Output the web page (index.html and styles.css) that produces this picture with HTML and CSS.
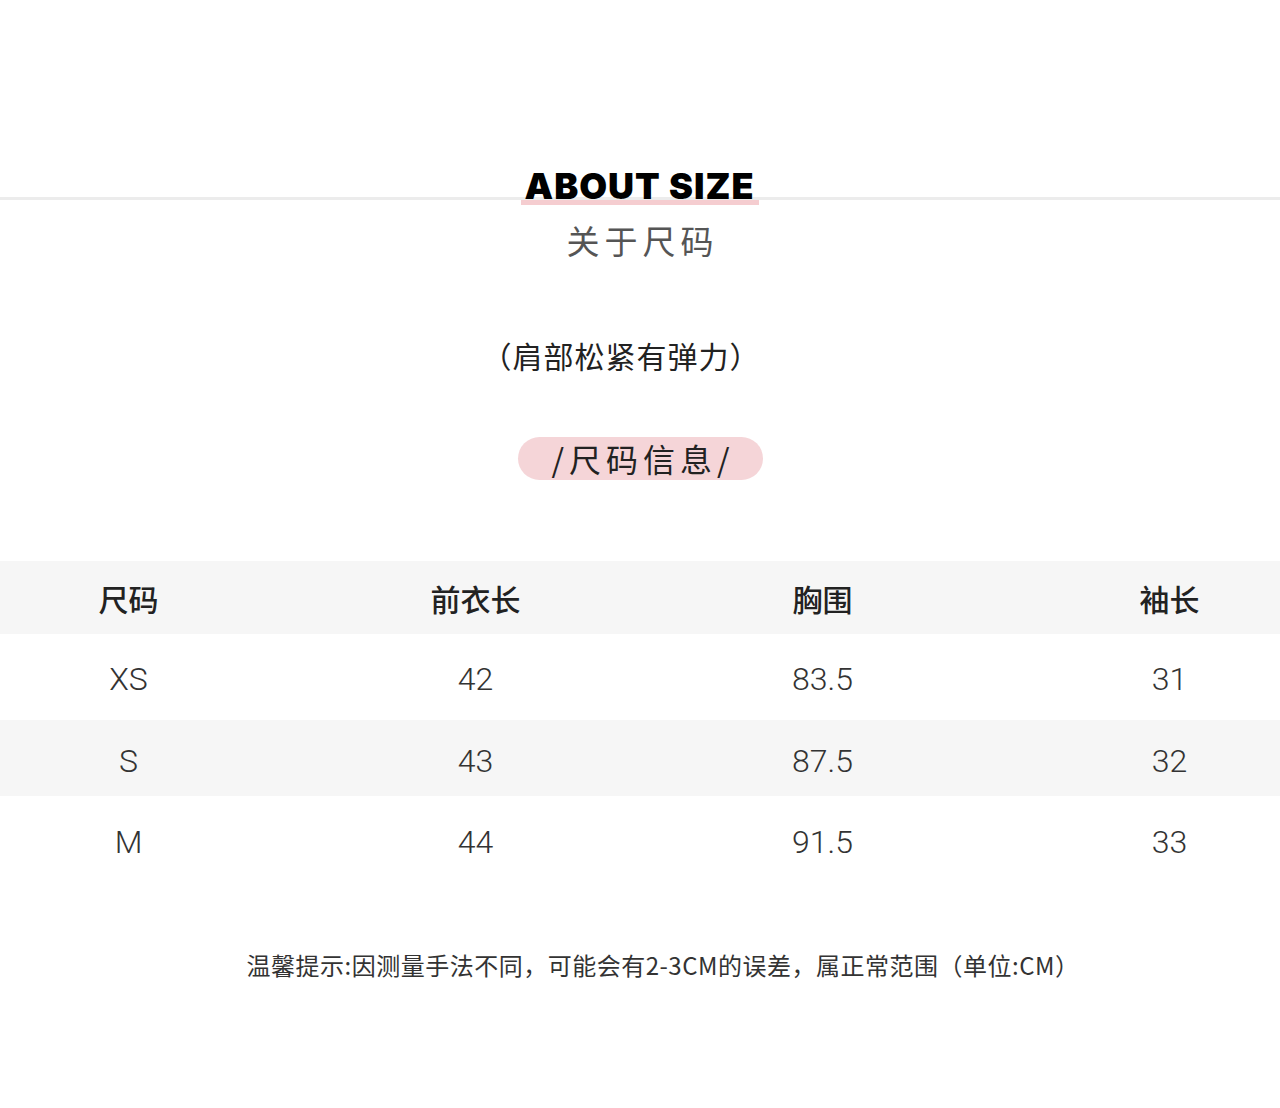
FILE: index.html
```html
<!DOCTYPE html>
<html lang="zh-CN">
<head>
<meta charset="utf-8">
<title>About Size</title>
<link rel="stylesheet" href="styles.css">
</head>
<body>
<main class="page">
  <header class="heading">
    <div class="title-band"><h1 class="title">ABOUT SIZE</h1></div>
    <p class="subtitle">关于尺码</p>
  </header>

  <p class="note">（肩部松紧有弹力）</p>

  <div class="pill-wrap"><span class="pill">/尺码信息/</span></div>

  <section class="table">
    <div class="row head">
      <div class="cells"><span>尺码</span><span>前衣长</span><span>胸围</span><span>袖长</span></div>
    </div>
    <div class="row r1">
      <div class="cells"><span>XS</span><span>42</span><span>83.5</span><span>31</span></div>
    </div>
    <div class="row r2 alt">
      <div class="cells"><span>S</span><span>43</span><span>87.5</span><span>32</span></div>
    </div>
    <div class="row r3">
      <div class="cells"><span>M</span><span>44</span><span>91.5</span><span>33</span></div>
    </div>
  </section>

  <p class="tip">温馨提示:因测量手法不同，可能会有2-3CM的误差，属正常范围（单位:CM）</p>
</main>
</body>
</html>
```

FILE: styles.css
```css
* { box-sizing: border-box; }
html, body { margin: 0; padding: 0; background: #fff; }
body {
  width: 1280px;
  height: 1108px;
  overflow: hidden;
  font-family: "Noto Sans CJK SC", "Noto Sans", sans-serif;
  color: #222;
}
.page { padding-top: 166px; }

.heading { text-align: center; }
.title-band {
  height: 40px;
  background: linear-gradient(#ececec, #ececec) no-repeat 0 31px / 100% 3px;
}
.title {
  display: inline-block;
  margin: 0;
  padding: 0 5px 0 4px;
  font-family: "Inter", "Liberation Sans", sans-serif;
  font-weight: 900;
  font-size: 36px;
  line-height: 40px;
  letter-spacing: 1px;
  color: #000;
  background: linear-gradient(#f5cdd0, #f5cdd0) no-repeat 0 34px / 100% 5px;
}
.subtitle {
  margin: 14px 0 0;
  font-size: 33px;
  line-height: 40px;
  letter-spacing: 5px;
  padding-left: 5px;
  color: #555;
}

.note {
  margin: 75px 0 0;
  padding-right: 38px;
  text-align: center;
  font-size: 30px;
  line-height: 40px;
  letter-spacing: 1px;
  color: #222;
}

.pill-wrap {
  margin-top: 62px;
  display: flex;
  justify-content: center;
}
.pill {
  width: 245px;
  height: 43px;
  border-radius: 22px;
  background: #f5d5d8;
  display: flex;
  align-items: center;
  justify-content: center;
  font-size: 32px;
  line-height: 43px;
  letter-spacing: 5px;
  padding-left: 6px;
  color: #222;
}

.table { margin-top: 81px; }
.row { width: 100%; overflow: hidden; }
.row.head, .row.alt { background: #f6f6f6; }
.row.head { height: 73px; }
.row.r1 { height: 86px; }
.row.r2 { height: 76px; }
.row.r3 { height: 84px; }
.cells {
  height: 100%;
  display: grid;
  grid-template-columns: repeat(4, 347px);
  margin-left: -45px;
  align-items: center;
  justify-items: center;
}
.head .cells span {
  font-size: 30px;
  font-weight: 500;
  color: #222;
  padding-top: 1px;
}
.r1 .cells span, .r2 .cells span, .r3 .cells span {
  font-family: "Roboto", "Liberation Sans", sans-serif;
  font-size: 32px;
  font-weight: 300;
  color: #333;
  padding-top: 4px;
}
.r2 .cells span { padding-top: 6px; }
.r3 .cells span { padding-top: 8px; }

.tip {
  margin: 70px 0 0;
  padding-left: 46px;
  text-align: center;
  font-size: 24px;
  line-height: 30px;
  letter-spacing: 0.5px;
  color: #333;
}
```
